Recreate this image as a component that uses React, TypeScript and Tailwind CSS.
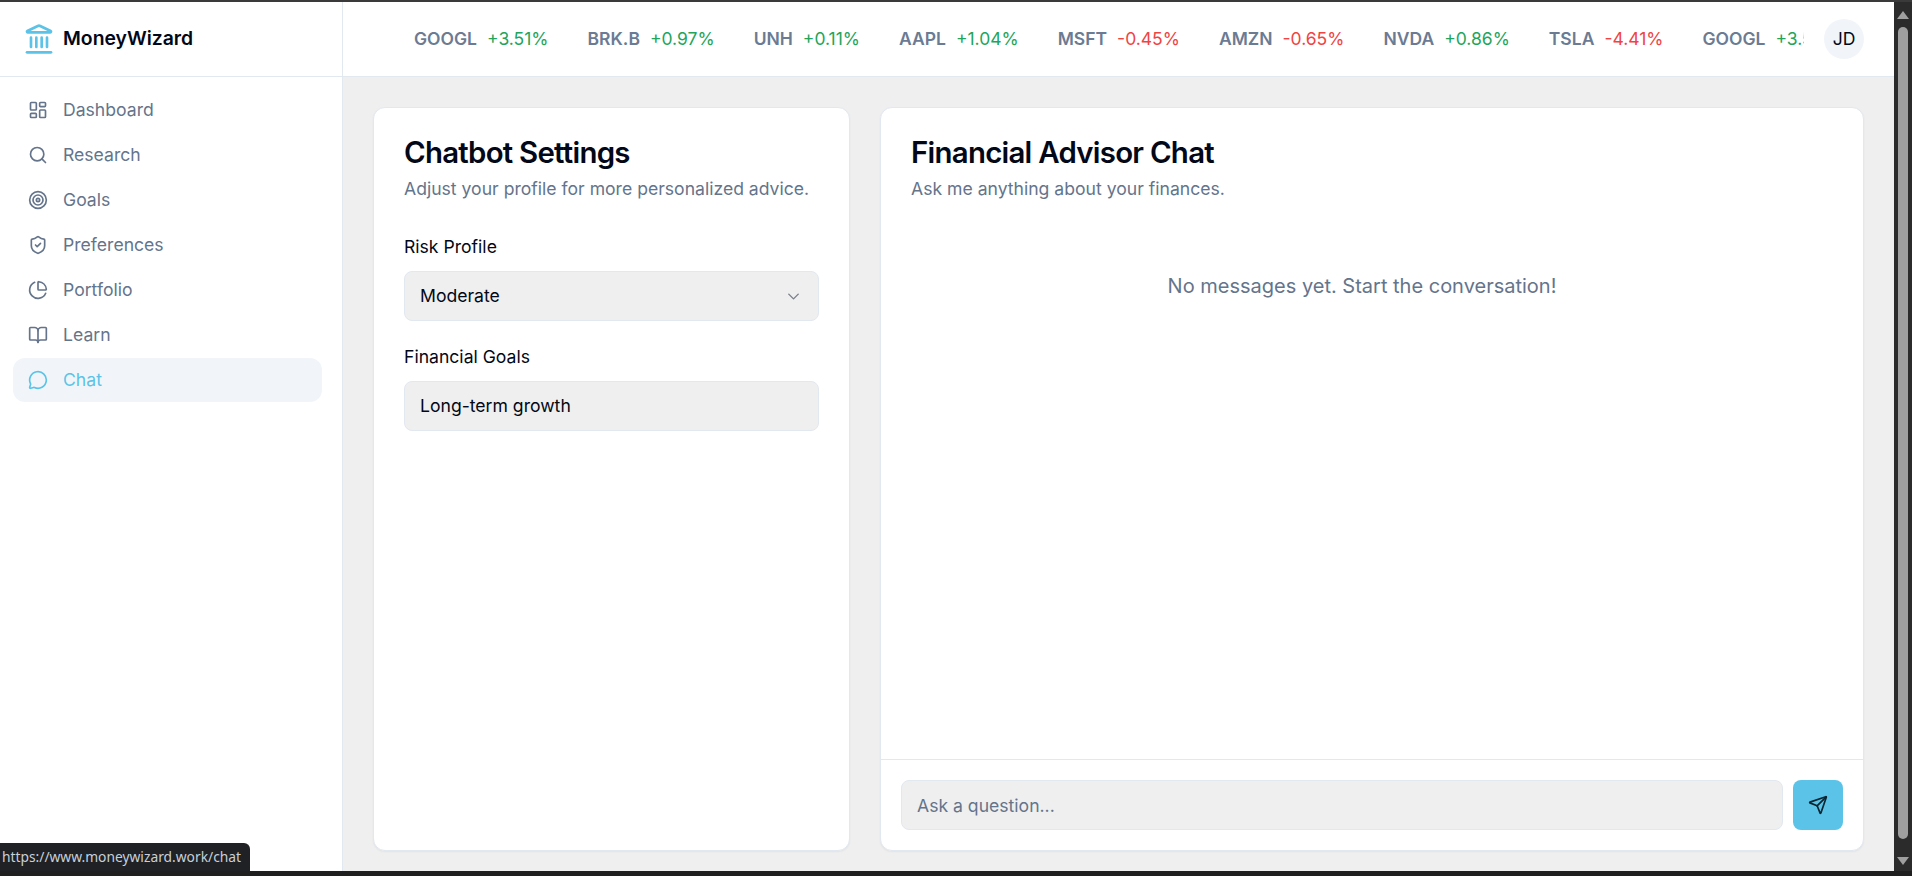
import {
  LayoutDashboard,
  Search,
  Target,
  ShieldCheck,
  ChartPie,
  BookOpen,
  MessageCircle,
  Landmark,
  ChevronDown,
  Send,
} from 'lucide-react'

const navItems = [
  { label: 'Dashboard', icon: LayoutDashboard },
  { label: 'Research', icon: Search },
  { label: 'Goals', icon: Target },
  { label: 'Preferences', icon: ShieldCheck },
  { label: 'Portfolio', icon: ChartPie },
  { label: 'Learn', icon: BookOpen },
  { label: 'Chat', icon: MessageCircle, active: true },
]

const tickers = [
  { symbol: 'GOOGL', change: '+3.51%', up: true },
  { symbol: 'BRK.B', change: '+0.97%', up: true },
  { symbol: 'UNH', change: '+0.11%', up: true },
  { symbol: 'AAPL', change: '+1.04%', up: true },
  { symbol: 'MSFT', change: '-0.45%', up: false },
  { symbol: 'AMZN', change: '-0.65%', up: false },
  { symbol: 'NVDA', change: '+0.86%', up: true },
  { symbol: 'TSLA', change: '-4.41%', up: false },
  { symbol: 'GOOGL', change: '+3.51%', up: true },
]

function Sidebar() {
  return (
    <aside className="w-[343px] shrink-0 flex flex-col bg-white border-r border-[#e2e8f0]">
      <div className="h-[75px] shrink-0 flex items-center gap-[8px] pl-[23px] border-b border-[#e2e8f0]">
        <Landmark className="w-8 h-8 text-[#5bc3e7]" strokeWidth={2} />
        <span className="text-[19.36px] font-semibold text-[#020817]">MoneyWizard</span>
      </div>
      <nav className="flex flex-col gap-[1px] pl-[13px] pr-[20px] py-[11px]">
        {navItems.map((item) => (
          <a
            key={item.label}
            className={
              item.active
                ? 'h-[44px] flex items-center gap-[15px] pl-[15px] rounded-[12px] bg-[#f1f5f9] text-[#5bc3e7] text-[17.6px]'
                : 'h-[44px] flex items-center gap-[15px] pl-[15px] rounded-[12px] text-[#64748b] text-[17.6px]'
            }
          >
            <item.icon className="w-5 h-5" strokeWidth={2} />
            {item.label}
          </a>
        ))}
      </nav>
    </aside>
  )
}

function Header() {
  return (
    <header className="h-[75px] shrink-0 flex items-center bg-white border-b border-[#e2e8f0] pr-[30px]">
      <div className="flex-1 min-w-0 overflow-hidden pl-[71px]">
        <div className="flex gap-[39px] whitespace-nowrap text-[17.5px]">
          {tickers.map((t, i) => (
            <div key={i} className="flex gap-[10px] shrink-0">
              <span className="font-semibold text-[#6b7b93]">{t.symbol}</span>
              <span className={t.up ? 'text-[#22a55b]' : 'text-[#ef4444]'}>{t.change}</span>
            </div>
          ))}
        </div>
      </div>
      <div className="w-10 h-10 ml-[20px] shrink-0 rounded-full bg-[#f1f5f9] flex items-center justify-center text-[17.6px] text-[#020817]">
        JD
      </div>
    </header>
  )
}

function SettingsCard() {
  return (
    <section className="w-[477px] shrink-0 flex flex-col bg-white border border-[#e2e8f0] rounded-[12px] shadow-xs px-[30px] pt-[27px]">
      <h2 className="text-[29.4px] leading-[36px] font-semibold tracking-tight text-[#020817]">Chatbot Settings</h2>
      <p className="mt-[5px] text-[17.6px] leading-[26px] text-[#64748b]">Adjust your profile for more personalized advice.</p>
      <label className="mt-[32px] text-[17.6px] leading-[26px] text-[#020817]">Risk Profile</label>
      <div className="mt-[11px] h-[50px] flex items-center justify-between px-[15px] bg-[#efefef] border border-[#e2e8f0] rounded-[8px] text-[17.6px] text-[#020817]">
        Moderate
        <ChevronDown className="w-[19px] h-[19px] text-[#7b7f87]" strokeWidth={1.75} />
      </div>
      <label className="mt-[23px] text-[17.6px] leading-[26px] text-[#020817]">Financial Goals</label>
      <div className="mt-[11px] h-[50px] flex items-center px-[15px] bg-[#efefef] border border-[#e2e8f0] rounded-[8px] text-[17.6px] text-[#020817]">
        Long-term growth
      </div>
    </section>
  )
}

function ChatCard() {
  return (
    <section className="flex-1 min-w-0 flex flex-col bg-white border border-[#e2e8f0] rounded-[12px] shadow-xs">
      <div className="px-[30px] pt-[27px]">
        <h2 className="text-[29.4px] leading-[36px] font-semibold tracking-tight text-[#020817]">Financial Advisor Chat</h2>
        <p className="mt-[5px] text-[17.6px] leading-[26px] text-[#64748b]">Ask me anything about your finances.</p>
      </div>
      <div className="flex-1 pt-[70px] pr-[20px] text-center text-[20px] leading-[28px] text-[#64748b]">
        No messages yet. Start the conversation!
      </div>
      <div className="flex gap-[10px] p-[20px] border-t border-[#e2e8f0]">
        <div className="flex-1 h-[50px] flex items-center px-[15px] pt-[2px] bg-[#efefef] border border-[#e2e8f0] rounded-[8px] text-[17.6px] text-[#64748b]">
          Ask a question...
        </div>
        <button className="w-[50px] h-[50px] flex items-center justify-center bg-[#5bc3e7] rounded-[8px] text-[#0b2530]">
          <Send className="w-5 h-5" />
        </button>
      </div>
    </section>
  )
}

function Scrollbar() {
  return (
    <div className="w-[18px] shrink-0 flex flex-col items-center bg-[#2b2b2b]">
      <svg className="mt-[9px] shrink-0" width="12" height="8" viewBox="0 0 12 8">
        <path d="M6 0 L12 8 L0 8 Z" fill="#9f9f9f" />
      </svg>
      <div className="mt-[8px] w-[10px] flex-1 rounded-full bg-[#9f9f9f]" />
      <svg className="mt-[18px] mb-[6px] shrink-0" width="12" height="8" viewBox="0 0 12 8">
        <path d="M0 0 L12 0 L6 8 Z" fill="#9f9f9f" />
      </svg>
    </div>
  )
}

export default function App() {
  return (
    <div
      className="relative h-[876px] w-[1912px] overflow-hidden flex flex-col bg-[#1f1f1f]"
      style={{ fontFamily: 'Inter, "Liberation Sans", sans-serif' }}
    >
      <div className="h-[2px] shrink-0 bg-[#3a3a3a]" />
      <div className="flex-1 min-h-0 flex">
        <Sidebar />
        <div className="flex-1 min-w-0 flex flex-col bg-[#efefef]">
          <Header />
          <main className="flex-1 min-h-0 flex gap-[30px] pt-[30px] px-[30px] pb-[20px]">
            <SettingsCard />
            <ChatCard />
          </main>
        </div>
        <Scrollbar />
      </div>
      <div className="h-[5px] shrink-0 bg-[#1f1f1f]" />
      {/* Link preview shown by the browser */}
      <div className="absolute left-0 bottom-[5px] h-[28px] w-[250px] flex items-center justify-end pr-[9px] bg-[#202124] rounded-tr-[6px] text-[13.8px] text-[#c7d0d9] whitespace-nowrap" style={{ fontFamily: '"Noto Sans", sans-serif' }}>
        https://www.moneywizard.work/chat
      </div>
    </div>
  )
}
